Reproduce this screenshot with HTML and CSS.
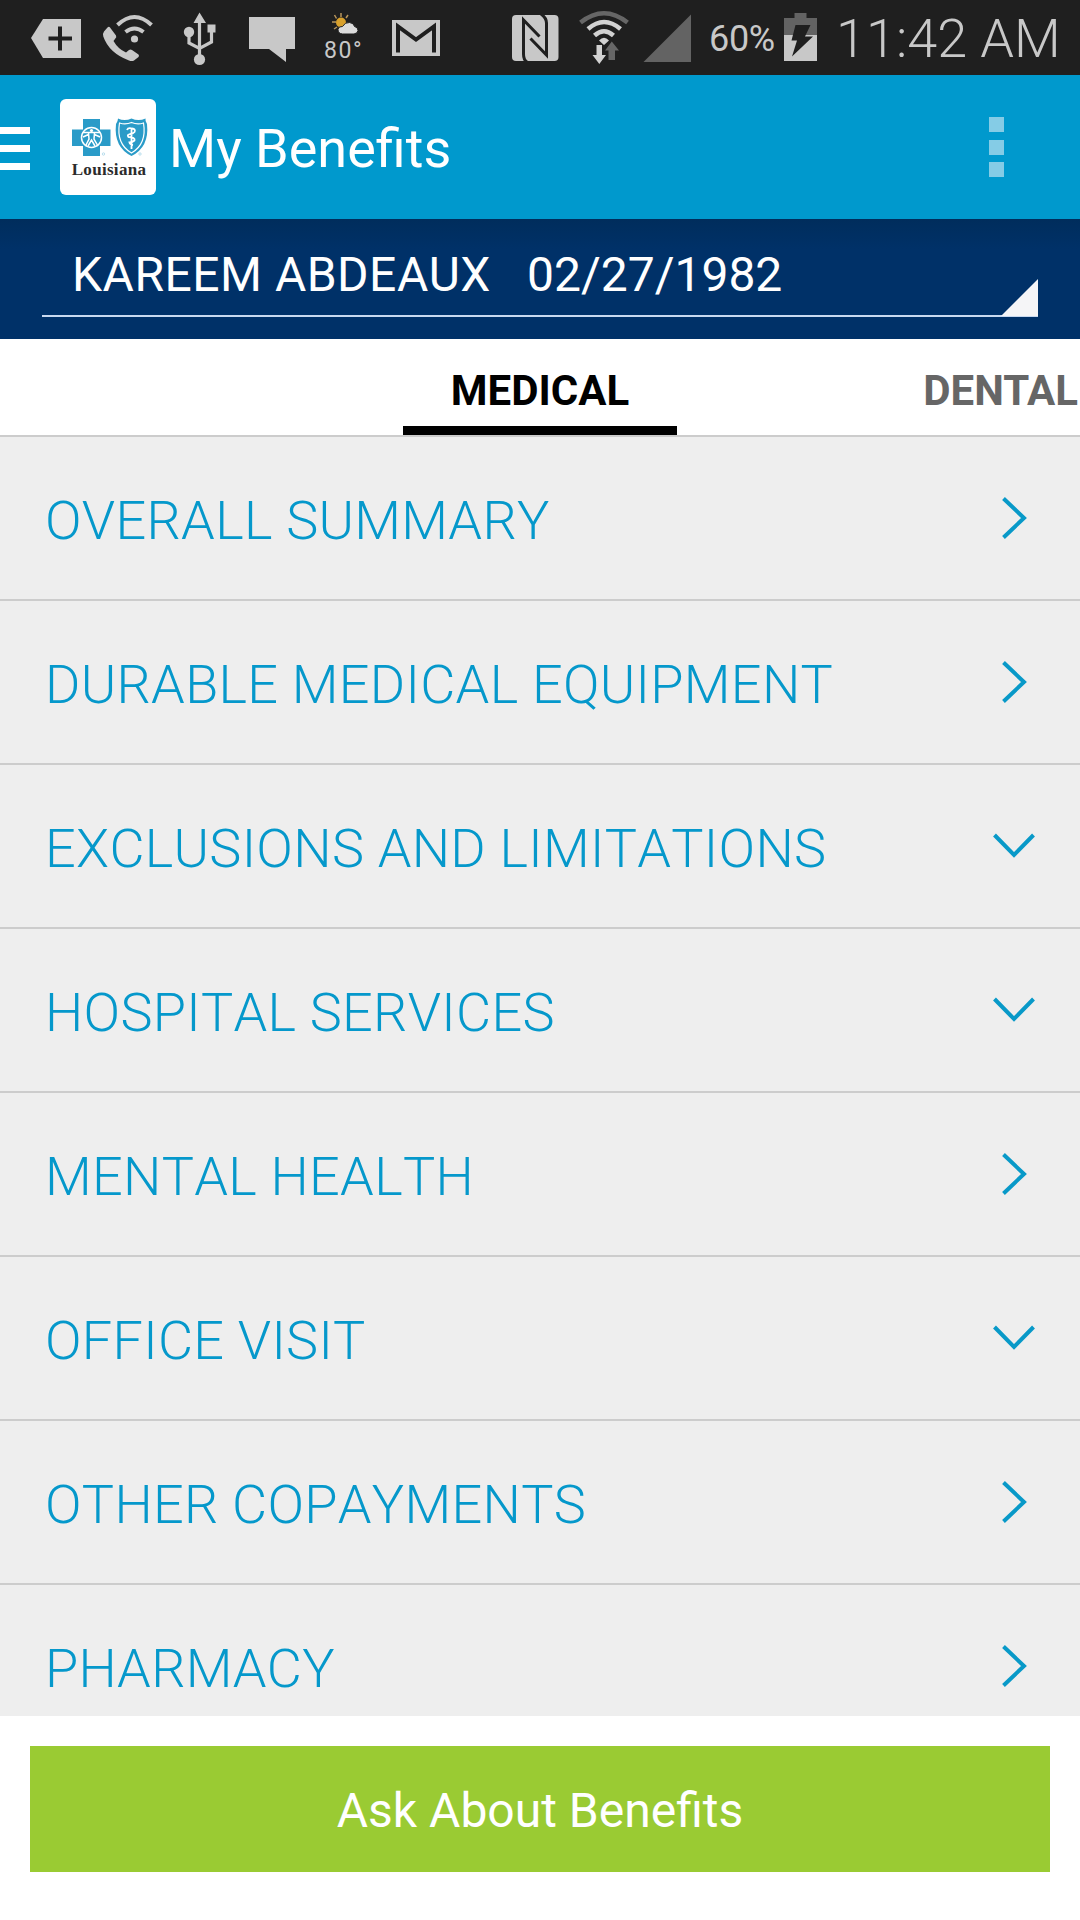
FILE: index.html
```html
<!DOCTYPE html>
<html lang="en">
<head>
    <meta charset="UTF-8">
    <meta name="viewport" content="width=device-width, initial-scale=1.0">
    <title>My Benefits</title>
    <link rel="stylesheet" href="styles.css">
</head>
<body>
    <div class="status-bar">
        <div class="status-icons">
            <svg width="92" height="75" viewBox="0 0 92 75">
                <path fill="#c8c8c8" d="M31 38L43 19H81V58H43Z"/>
                <path stroke="#1f1f1f" stroke-width="4" d="M60 26.500V50.500M48.500 38.500H72"/>
            </svg>
            <svg width="72" height="75" viewBox="92 0 72 75">
                <path fill="#c8c8c8" d="M110 27.500L116 35.500Q117 37 115 39L113.500 41Q118 49 126 52.500L129 50Q130.500 49 132 50L138.500 54.500Q139.500 55.500 138.500 57L134 60.500Q132 61.500 129 60.500Q109 53 103.300 36.500Q102.500 33.500 104 31.500L107.500 27.500Q109 26 110 27.500Z"/>
                <circle cx="134.500" cy="39" r="3.600" fill="#c8c8c8"/>
                <path fill="none" stroke="#c8c8c8" stroke-width="4" d="M125.500 32Q134.500 25 143.500 32M117.500 25Q134.500 9 151.500 25"/>
            </svg>
            <svg width="72" height="75" viewBox="164 0 72 75">
                <path fill="#c8c8c8" d="M199.500 12.500L206 23H193.500ZM207.500 24.500H215.500V32.500H207.500Z"/>
                <circle cx="189" cy="32" r="5.200" fill="#c8c8c8"/>
                <circle cx="199.500" cy="59.500" r="5.600" fill="#c8c8c8"/>
                <path fill="none" stroke="#c8c8c8" stroke-width="3.200" d="M199.500 22V57M189 34V43L199.500 48.500L211.500 42V30"/>
            </svg>
            <svg width="76" height="75" viewBox="236 0 76 75">
                <path fill="#c8c8c8" d="M249 17H295V49H286V62L269 49H249Z"/>
            </svg>
            <div class="weather">
                <svg width="60" height="38" viewBox="312 0 60 38">
                    <path stroke="#b8955c" stroke-width="1.500" d="M341 13V17M334.500 15L336.500 18.500M348 15L346 18M332 22H336M334 29L337 27"/>
                    <circle cx="341" cy="22.500" r="5" fill="#d9a12c"/>
                    <path fill="#dcdcdc" stroke="#1f1f1f" stroke-width="1" d="M342.500 34Q338 33.500 338 29.500Q338.500 26 342.500 26.500Q345 22 349.500 22.500Q354 23 354.500 26.500Q358 27 358 30.500Q357.500 33.500 354 34Z"/>
                </svg>
                <span class="temp">80°</span>
            </div>
            <svg width="88" height="75" viewBox="372 0 88 75">
                <path fill="#c8c8c8" d="M392 20H440V56H392Z"/>
                <path fill="none" stroke="#1f1f1f" stroke-width="4" d="M398 52.500V26.500L416 39.500L434 26.500V52.500"/>
            </svg>
        </div>
        <div class="status-right">
            <svg width="74" height="75" viewBox="500 0 74 75">
                <rect x="512" y="15" width="46.500" height="46" rx="4" fill="#c8c8c8"/>
                <path fill="none" stroke="#1f1f1f" stroke-width="3" d="M527 62Q523.500 60 523.500 54V20L539.500 36.500M541 14Q546.500 18 546.500 23V55L530.500 38.500"/>
            </svg>
            <svg width="64" height="75" viewBox="574 0 64 75">
                <path fill="none" stroke="#666" stroke-width="4.500" d="M580.500 22.500Q604 4 627.500 22.500"/>
                <path fill="none" stroke="#d2d2d2" stroke-width="4.500" d="M588 29Q604 15 620.500 29M594.500 35.500Q604 27 613.500 35.500"/>
                <path fill="#d2d2d2" d="M599 40.500Q604 35 609 40.500L604 45ZM596.500 45H602V55H606L599.300 64L592.500 55H596.500Z"/>
                <path fill="#666" d="M608.500 60V50.500H605L611.800 41.500L619 50.500H615V60Z"/>
            </svg>
            <svg width="62" height="75" viewBox="638 0 62 75">
                <path fill="#636363" d="M643.500 62L691 14.500V62Z"/>
            </svg>
            <span class="percent">60%</span>
            <svg width="44" height="75" viewBox="780 0 44 75">
                <path fill="#636363" d="M794.500 13H806.500V18H817V36H784V18H794.500Z"/>
                <path fill="#c8c8c8" d="M784 35H817V61H784Z"/>
                <path fill="#1f1f1f" d="M795.500 25H810.500L805 36.500H813L792 56.500L797 40.500H791.500Z"/>
            </svg>
            <span class="clock">11:42 AM</span>
        </div>
    </div>

    <div class="header">
        <div class="menu">
            <span></span>
            <span></span>
            <span></span>
        </div>
        <div class="logo">
            <svg width="96" height="62" viewBox="60 99 96 62">
                <path fill="#2a9bc8" d="M83 119H100V129.500H110.500V146H100V156H83V146H72V129.500H83Z"/>
                <circle cx="91.500" cy="137.500" r="10" fill="none" stroke="#fff" stroke-width="1.500"/>
                <path fill="none" stroke="#fff" stroke-width="1.500" d="M83 132.500H100M88.500 133L89 139L85.500 146M94.500 133L94 139L98 146M88 146L91.500 140L95 146M83 137L88.500 134.500M100 137L94.500 134.500"/>
                <circle cx="91.500" cy="130.500" r="1.600" fill="#fff"/>
                <path fill="#2a9bc8" d="M118 118.500Q124.500 121.500 131.500 118.500Q138.500 121.500 145.500 118.500Q145 121 147 124Q149.500 147 131.500 156Q113.500 147 116 124Q118 121 118 118.500Z"/>
                <path fill="none" stroke="#fff" stroke-width="1.200" d="M119.500 123Q125.500 125 131.500 122.500Q137.500 125 143.500 123Q147 144 131.500 153Q116 144 119.500 123Z"/>
                <path fill="none" stroke="#fff" stroke-width="1.800" d="M131.500 128V149M127 130Q128 127.500 132 128.500Q136 129 134.500 132Q133 134 130 134Q126.500 135 128.500 137Q135.500 137.500 134.500 140.500Q132 142.500 129.500 142.500Q130 144.500 133 145"/>
                <circle cx="103.500" cy="154" r="1.200" fill="none" stroke="#8fc9e0" stroke-width=".6"/>
                <circle cx="140" cy="154" r="1.200" fill="none" stroke="#8fc9e0" stroke-width=".6"/>
            </svg>
            <span class="logo-text">Louisiana</span>
        </div>
        <h1>My Benefits</h1>
        <div class="overflow">
            <span></span>
            <span></span>
            <span></span>
        </div>
    </div>

    <div class="member">
        <div class="spinner">
            <span class="name">KAREEM ABDEAUX</span>
            <span class="dob">02/27/1982</span>
            <svg class="corner" width="37" height="37" viewBox="0 0 37 37">
                <path fill="#f5f5f7" d="M0 37L37 0V37Z"/>
            </svg>
        </div>
    </div>

    <div class="tabs">
        <div class="tab active">MEDICAL</div>
        <div class="tab next">DENTAL</div>
    </div>

    <div class="list">
        <div class="row">
            <span>OVERALL SUMMARY</span>
            <svg width="42" height="42"><path d="M10.500 1.500L31 21L10.500 40.500"/></svg>
        </div>
        <div class="row">
            <span>DURABLE MEDICAL EQUIPMENT</span>
            <svg width="42" height="42"><path d="M10.500 1.500L31 21L10.500 40.500"/></svg>
        </div>
        <div class="row">
            <span>EXCLUSIONS AND LIMITATIONS</span>
            <svg width="42" height="42"><path d="M1.500 10L21 30L40.500 10"/></svg>
        </div>
        <div class="row">
            <span>HOSPITAL SERVICES</span>
            <svg width="42" height="42"><path d="M1.500 10L21 30L40.500 10"/></svg>
        </div>
        <div class="row">
            <span>MENTAL HEALTH</span>
            <svg width="42" height="42"><path d="M10.500 1.500L31 21L10.500 40.500"/></svg>
        </div>
        <div class="row">
            <span>OFFICE VISIT</span>
            <svg width="42" height="42"><path d="M1.500 10L21 30L40.500 10"/></svg>
        </div>
        <div class="row">
            <span>OTHER COPAYMENTS</span>
            <svg width="42" height="42"><path d="M10.500 1.500L31 21L10.500 40.500"/></svg>
        </div>
        <div class="row">
            <span>PHARMACY</span>
            <svg width="42" height="42"><path d="M10.500 1.500L31 21L10.500 40.500"/></svg>
        </div>
    </div>

    <div class="footer">
        <button>Ask About Benefits</button>
    </div>
</body>
</html>
```
FILE: styles.css
```css
* {
    box-sizing: border-box;
}
body {
    margin: 0;
    width: 1080px;
    height: 1920px;
    display: flex;
    flex-direction: column;
    overflow: hidden;
    background-color: #ffffff;
    font-family: Roboto, sans-serif;
}
svg {
    display: block;
    flex: none;
}
.status-bar {
    height: 75px;
    display: flex;
    justify-content: space-between;
    background-color: #1f1f1f;
    color: #c8c8c8;
    white-space: nowrap;
}
.status-icons,
.status-right {
    display: flex;
}
.status-right {
    width: 580px;
}
.weather {
    width: 60px;
}
.temp {
    display: block;
    padding-left: 12px;
    font-size: 23px;
    line-height: 25px;
    letter-spacing: 1.6px;
}
.percent {
    width: 80px;
    padding-left: 9px;
    font-size: 36px;
    line-height: 79px;
    letter-spacing: -0.3px;
}
.clock {
    padding-left: 12px;
    font-size: 54px;
    font-weight: 300;
    line-height: 77px;
}
.header {
    height: 144px;
    display: flex;
    align-items: center;
    padding-right: 76px;
    background-color: #0099cd;
}
.menu {
    width: 30px;
    margin: 2px 30px 0 0;
    display: grid;
    gap: 11px;
}
.menu span {
    height: 7px;
    background-color: #ffffff;
}
.logo {
    width: 96px;
    height: 96px;
    background-color: #ffffff;
    border-radius: 6px;
}
.logo-text {
    display: block;
    padding-left: 2px;
    color: #2b2b2b;
    font-family: "Liberation Serif", serif;
    font-size: 17px;
    font-weight: bold;
    line-height: 18px;
    text-align: center;
    letter-spacing: 0.3px;
}
h1 {
    flex: 1;
    margin: 0 0 0 13px;
    padding-top: 4px;
    color: #ffffff;
    font-size: 54px;
    font-weight: 400;
    line-height: 64px;
}
.overflow {
    width: 15px;
    display: grid;
    gap: 7.5px;
}
.overflow span {
    height: 15px;
    background-color: #85cce6;
}
.member {
    height: 120px;
    padding: 0 42px;
    background: linear-gradient(#002d5c, #003168 30px);
}
.spinner {
    position: relative;
    height: 98px;
    display: flex;
    gap: 36px;
    padding: 28px 0 0 30px;
    border-bottom: 2px solid #c8d9f0;
    color: #ffffff;
    font-size: 48px;
    line-height: 56px;
    font-kerning: none;
    white-space: nowrap;
}
.name {
    letter-spacing: 0.5px;
}
.corner {
    position: absolute;
    right: 0;
    bottom: -1px;
}
.tabs {
    height: 96px;
    display: grid;
    grid-template-columns: 403px 274px 403px;
    font-size: 42px;
    font-weight: bold;
    line-height: 104px;
}
.tab {
    height: 96px;
}
.tab.active {
    grid-column: 2;
    color: #000000;
    text-align: center;
    border-bottom: 9px solid #000000;
}
.tab.next {
    color: #666666;
    text-align: right;
    padding-right: 2px;
}
.list {
    height: 1281px;
    overflow: hidden;
    background-color: #eeeeee;
}
.row {
    height: 164px;
    display: flex;
    align-items: center;
    justify-content: space-between;
    padding: 0 45px;
    border-top: 2px solid #cccccc;
    color: #0598cb;
    font-size: 54px;
    font-weight: 300;
    font-kerning: none;
    letter-spacing: 0.3px;
    white-space: nowrap;
}
.row span {
    padding-top: 4px;
}
.row svg path {
    fill: none;
    stroke: #0899c8;
    stroke-width: 4;
}
.footer {
    height: 204px;
    padding: 30px 30px 48px;
}
button {
    width: 100%;
    height: 126px;
    padding: 2px 0 0;
    border: none;
    background-color: #9acb33;
    color: #ffffff;
    font-family: inherit;
    font-size: 48px;
}
```
